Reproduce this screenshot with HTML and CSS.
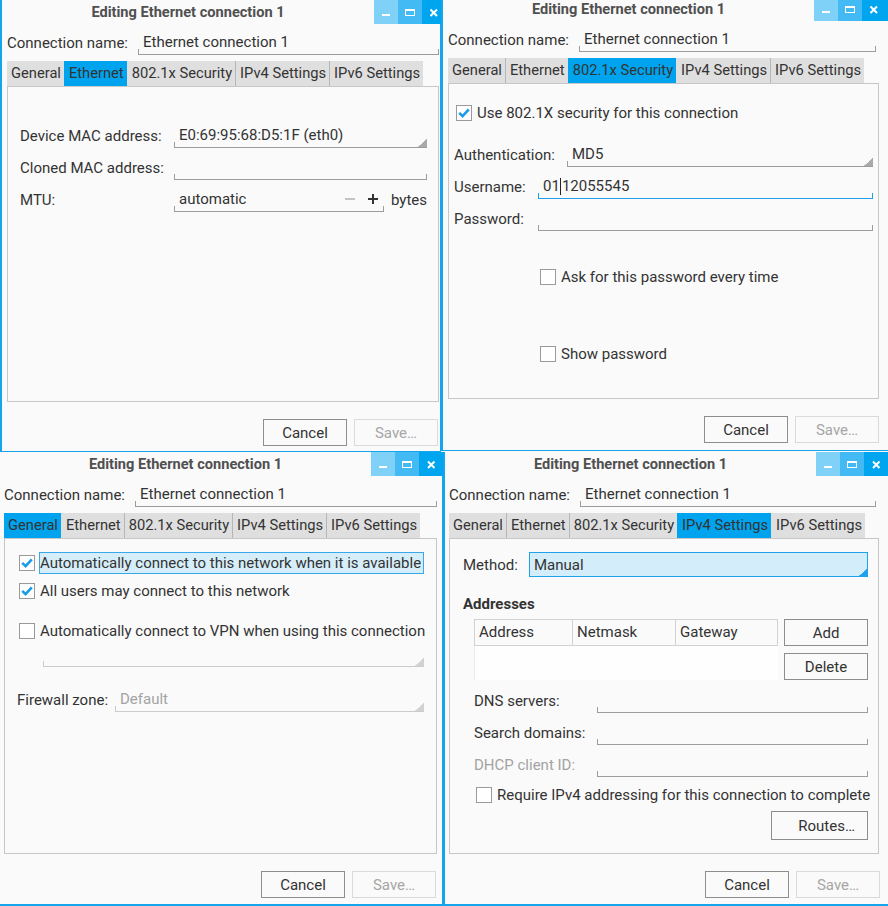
FILE: index.html
```html
<!DOCTYPE html>
<html>
<head>
<meta charset="utf-8">
<title>Editing Ethernet connection 1</title>
<link rel="stylesheet" href="styles.css">
</head>
<body>
<div class="screen">

  <!-- Window 1: Ethernet tab -->
  <section class="win w1">
    <header class="titlebar">
      <div class="title">Editing Ethernet connection 1</div>
      <div class="tb tb-min"><svg width="24" height="24" viewBox="0 0 24 24"><rect x="8" y="14" width="8" height="2" fill="#fff"/></svg></div>
      <div class="tb tb-max"><svg width="24" height="24" viewBox="0 0 24 24"><rect x="7.5" y="9.5" width="9" height="6" fill="none" stroke="#fff"/><rect x="7" y="9" width="10" height="2" fill="#fff"/></svg></div>
      <div class="tb tb-close"><svg width="24" height="24" viewBox="0 0 24 24"><path d="M8.5 9.5 L15 16 M15 9.5 L8.5 16" stroke="#fff" stroke-width="2"/></svg></div>
    </header>
    <div class="body">
      <div class="conn-row"><span class="conn-lbl">Connection name:</span><div class="entry">Ethernet connection 1</div></div>
      <nav class="tabs">
        <span class="tab">General</span><span class="tab active">Ethernet</span><span class="tab">802.1x Security</span><span class="tab">IPv4 Settings</span><span class="tab">IPv6 Settings</span>
      </nav>
      <div class="panel p-eth">
        <div class="row"><span class="lbl">Device MAC address:</span><div class="entry combo">E0:69:95:68:D5:1F (eth0)</div></div>
        <div class="row"><span class="lbl">Cloned MAC address:</span><div class="entry"></div></div>
        <div class="row"><span class="lbl">MTU:</span><div class="entry spin"><span class="spin-val">automatic</span><svg class="spin-minus" width="10" height="10" viewBox="0 0 10 10"><rect x="0" y="4" width="10" height="2" fill="#c4c4c4"/></svg><svg class="spin-plus" width="10" height="10" viewBox="0 0 10 10"><rect x="0" y="4" width="10" height="2" fill="#333"/><rect x="4" y="0" width="2" height="10" fill="#333"/></svg></div><span class="unit">bytes</span></div>
      </div>
      <div class="actions a1"><span class="btn">Cancel</span><span class="btn disabled">Save…</span></div>
    </div>
  </section>

  <!-- Window 2: 802.1x Security tab -->
  <section class="win w2">
    <header class="titlebar">
      <div class="title">Editing Ethernet connection 1</div>
      <div class="tb tb-min"><svg width="24" height="24" viewBox="0 0 24 24"><rect x="8" y="14" width="8" height="2" fill="#fff"/></svg></div>
      <div class="tb tb-max"><svg width="24" height="24" viewBox="0 0 24 24"><rect x="7.5" y="9.5" width="9" height="6" fill="none" stroke="#fff"/><rect x="7" y="9" width="10" height="2" fill="#fff"/></svg></div>
      <div class="tb tb-close"><svg width="24" height="24" viewBox="0 0 24 24"><path d="M8.5 9.5 L15 16 M15 9.5 L8.5 16" stroke="#fff" stroke-width="2"/></svg></div>
    </header>
    <div class="body">
      <div class="conn-row"><span class="conn-lbl">Connection name:</span><div class="entry short">Ethernet connection 1</div></div>
      <nav class="tabs">
        <span class="tab">General</span><span class="tab">Ethernet</span><span class="tab active">802.1x Security</span><span class="tab">IPv4 Settings</span><span class="tab">IPv6 Settings</span>
      </nav>
      <div class="panel p-sec">
        <div class="row chk-row s-use"><svg class="cb" viewBox="0 0 16 16"><rect x="0.5" y="0.5" width="15" height="15" fill="#fff" stroke="#9a9a9a"/><path d="M3.2 7.8 L6.6 11.2 L12.8 4.4" fill="none" stroke="#1a9de8" stroke-width="2.6"/></svg><span class="ctext">Use 802.1X security for this connection</span></div>
        <div class="row s-auth"><span class="lbl">Authentication:</span><div class="entry combo">MD5</div></div>
        <div class="row s-user"><span class="lbl">Username:</span><div class="entry focus">01<span class="caret"></span>12055545</div></div>
        <div class="row s-pass"><span class="lbl">Password:</span><div class="entry"></div></div>
        <div class="row chk-row s-ask"><svg class="cb" viewBox="0 0 16 16"><rect x="0.5" y="0.5" width="15" height="15" fill="#fff" stroke="#9a9a9a"/></svg><span class="ctext">Ask for this password every time</span></div>
        <div class="row chk-row s-show"><svg class="cb" viewBox="0 0 16 16"><rect x="0.5" y="0.5" width="15" height="15" fill="#fff" stroke="#9a9a9a"/></svg><span class="ctext">Show password</span></div>
      </div>
      <div class="actions a2"><span class="btn">Cancel</span><span class="btn disabled">Save…</span></div>
    </div>
  </section>

  <!-- Window 3: General tab -->
  <section class="win w3">
    <header class="titlebar">
      <div class="title">Editing Ethernet connection 1</div>
      <div class="tb tb-min"><svg width="24" height="24" viewBox="0 0 24 24"><rect x="8" y="14" width="8" height="2" fill="#fff"/></svg></div>
      <div class="tb tb-max"><svg width="24" height="24" viewBox="0 0 24 24"><rect x="7.5" y="9.5" width="9" height="6" fill="none" stroke="#fff"/><rect x="7" y="9" width="10" height="2" fill="#fff"/></svg></div>
      <div class="tb tb-close"><svg width="24" height="24" viewBox="0 0 24 24"><path d="M9 9.5 L15.5 16 M15.5 9.5 L9 16" stroke="#fff" stroke-width="2"/></svg></div>
    </header>
    <div class="body">
      <div class="conn-row"><span class="conn-lbl">Connection name:</span><div class="entry">Ethernet connection 1</div></div>
      <nav class="tabs">
        <span class="tab active">General</span><span class="tab">Ethernet</span><span class="tab">802.1x Security</span><span class="tab">IPv4 Settings</span><span class="tab">IPv6 Settings</span>
      </nav>
      <div class="panel p-gen">
        <div class="row chk-row g1"><svg class="cb" viewBox="0 0 16 16"><rect x="0.5" y="0.5" width="15" height="15" fill="#fff" stroke="#9a9a9a"/><path d="M3.2 7.8 L6.6 11.2 L12.8 4.4" fill="none" stroke="#1a9de8" stroke-width="2.6"/></svg><span class="focusbox">Automatically connect to this network when it is available</span></div>
        <div class="row chk-row g2"><svg class="cb" viewBox="0 0 16 16"><rect x="0.5" y="0.5" width="15" height="15" fill="#fff" stroke="#9a9a9a"/><path d="M3.2 7.8 L6.6 11.2 L12.8 4.4" fill="none" stroke="#1a9de8" stroke-width="2.6"/></svg><span class="ctext">All users may connect to this network</span></div>
        <div class="row chk-row g3"><svg class="cb" viewBox="0 0 16 16"><rect x="0.5" y="0.5" width="15" height="15" fill="#fff" stroke="#9a9a9a"/></svg><span class="ctext">Automatically connect to VPN when using this connection</span></div>
        <div class="entry combo dis vpn"></div>
        <div class="row g-fw"><span class="lbl">Firewall zone:</span><div class="entry combo dis dis-text">Default</div></div>
      </div>
      <div class="actions a3"><span class="btn">Cancel</span><span class="btn disabled">Save…</span></div>
    </div>
  </section>

  <!-- Window 4: IPv4 Settings tab -->
  <section class="win w4">
    <header class="titlebar">
      <div class="title">Editing Ethernet connection 1</div>
      <div class="tb tb-min"><svg width="24" height="24" viewBox="0 0 24 24"><rect x="8" y="14" width="8" height="2" fill="#fff"/></svg></div>
      <div class="tb tb-max"><svg width="24" height="24" viewBox="0 0 24 24"><rect x="7.5" y="9.5" width="9" height="6" fill="none" stroke="#fff"/><rect x="7" y="9" width="10" height="2" fill="#fff"/></svg></div>
      <div class="tb tb-close"><svg width="24" height="24" viewBox="0 0 24 24"><path d="M9 9.5 L15.5 16 M15.5 9.5 L9 16" stroke="#fff" stroke-width="2"/></svg></div>
    </header>
    <div class="body">
      <div class="conn-row"><span class="conn-lbl">Connection name:</span><div class="entry short">Ethernet connection 1</div></div>
      <nav class="tabs">
        <span class="tab">General</span><span class="tab">Ethernet</span><span class="tab">802.1x Security</span><span class="tab active">IPv4 Settings</span><span class="tab">IPv6 Settings</span>
      </nav>
      <div class="panel p-ip4">
        <div class="row i-method"><span class="lbl">Method:</span><div class="combo-focus">Manual</div></div>
        <div class="addr-title">Addresses</div>
        <div class="addr-block">
          <div class="table">
            <div class="thead"><span class="th c1">Address</span><span class="th c2">Netmask</span><span class="th c3">Gateway</span></div>
            <div class="tbody"></div>
          </div>
          <div class="addr-btns"><span class="btn">Add</span><span class="btn">Delete</span></div>
        </div>
        <div class="row ip-row first"><span class="lbl">DNS servers:</span><div class="entry"></div></div>
        <div class="row ip-row"><span class="lbl">Search domains:</span><div class="entry"></div></div>
        <div class="row ip-row"><span class="lbl dis-text">DHCP client ID:</span><div class="entry"></div></div>
        <div class="row chk-row i-req"><svg class="cb" viewBox="0 0 16 16"><rect x="0.5" y="0.5" width="15" height="15" fill="#fff" stroke="#9a9a9a"/></svg><span class="ctext">Require IPv4 addressing for this connection to complete</span></div>
        <div class="routes-row"><span class="btn routes">Routes…</span></div>
      </div>
      <div class="actions a4"><span class="btn">Cancel</span><span class="btn disabled">Save…</span></div>
    </div>
  </section>

</div>
</body>
</html>
```

FILE: styles.css
```css
* { box-sizing: border-box; }
html, body { margin: 0; padding: 0; }
body {
  width: 888px;
  height: 906px;
  overflow: hidden;
  background: #fafafa;
  font-family: Roboto, "Liberation Sans", sans-serif;
  font-size: 15px;
  color: #333;
}

.screen {
  display: flex;
  flex-wrap: wrap;
  align-items: flex-start;
  width: 888px;
}

/* windows */
.win {
  display: flex;
  flex-direction: column;
  background: #fafafa;
  border-left: 2px solid #14a5ec;
  border-bottom: 1px solid #14a5ec;
  overflow: hidden;
}
.w1 { width: 441px; height: 452px; }
.w2 { width: 447px; height: 451px; }
.w3 { width: 443px; height: 454px; border-left: 0; border-bottom-width: 2px; }
.w4 { width: 445px; height: 454px; border-bottom-width: 2px; }

.titlebar { display: flex; height: 24px; flex: none; }
.w2 .titlebar { margin-top: -3px; }
.title {
  flex: 1;
  text-align: center;
  font-weight: bold;
  font-size: 14.6px;
  color: #505050;
  line-height: 24px;
  white-space: nowrap;
}
.tb { flex: none; width: 24px; height: 24px; display: flex; overflow: hidden; }
.tb svg { flex: none; }
.tb-min { background: #80d1f8; }
.tb-max { background: #43baf3; }
.tb-close { background: #00a5ef; }
.w1 .tb-close { width: 19px; }
.w2 .tb-close { width: 26px; }

.body { flex: 1; display: flex; flex-direction: column; }
.w1 .body { padding: 0 1px 0 5px; border-right: 1px solid #14a5ec; }
.w2 .body { padding: 0 9px 0 5px; }
.w3 .body { padding: 0 5px 0 4px; border-right: 1px solid #14a5ec; }
.w4 .body { padding: 0 9px 0 4px; }

/* connection name */
.conn-row { display: flex; align-items: center; height: 25px; margin-top: 6px; flex: none; }
.conn-lbl { flex: none; width: 131px; white-space: nowrap; }
.entry.short { margin-right: 3px; }

/* tabs */
.tabs { display: flex; height: 25px; margin-top: 6px; flex: none; }
.tab {
  padding: 0 3px 0 4px;
  background: #dfdfdf;
  font-size: 14.7px;
  line-height: 25px;
  white-space: nowrap;
}
.tab + .tab { border-left: 1px solid #b6b6b6; }
.tab.active { background: #00a3ee; border-left-color: #00a3ee; }
.tab.active + .tab { border-left-color: #dfdfdf; }

/* notebook panel */
.panel {
  height: 316px;
  flex: none;
  border: 1px solid #c7c7c7;
  display: flex;
  flex-direction: column;
}

/* generic rows */
.row { display: flex; align-items: center; height: 25px; flex: none; }
.lbl { flex: none; white-space: nowrap; }

.entry {
  flex: 1;
  height: 25px;
  display: flex;
  align-items: center;
  padding-left: 5px;
  white-space: nowrap;
  overflow: hidden;
  border-bottom: 1px solid #9d9d9d;
  background:
    linear-gradient(#9d9d9d, #9d9d9d) left bottom / 1px 5px no-repeat,
    linear-gradient(#9d9d9d, #9d9d9d) right bottom / 1px 5px no-repeat;
}
.entry.combo {
  background:
    linear-gradient(to top left, #a9a9a9 50%, transparent 52%) right bottom / 9px 8px no-repeat,
    linear-gradient(#9d9d9d, #9d9d9d) left bottom / 1px 5px no-repeat;
}
.entry.combo.dis {
  border-bottom-color: #cbcbcb;
  background:
    linear-gradient(to top left, #d2d2d2 50%, transparent 52%) right bottom / 9px 8px no-repeat,
    linear-gradient(#cbcbcb, #cbcbcb) left bottom / 1px 5px no-repeat;
}
.entry.focus {
  border-bottom-color: #1e9fe8;
  background:
    linear-gradient(#1e9fe8, #1e9fe8) left bottom / 1px 5px no-repeat,
    linear-gradient(#1e9fe8, #1e9fe8) right bottom / 1px 5px no-repeat;
}
.caret { display: inline-block; width: 1px; height: 17px; background: #222; margin: 0 0.5px; }
.dis-text { color: #a3a3a3; }

.cb { width: 16px; height: 16px; flex: none; }
.ctext { margin-left: 5px; white-space: nowrap; }

/* buttons */
.actions { display: flex; justify-content: flex-end; gap: 7px; margin-top: 17px; flex: none; }
.a1, .a3 { margin-right: 1px; }
.a4 { margin-right: -1px; }
.btn {
  width: 84px;
  height: 27px;
  display: flex;
  align-items: center;
  justify-content: center;
  border: 1px solid #8e8e8e;
  background: #fafafa;
  white-space: nowrap;
}
.btn.disabled { border-color: #dadada; color: #a6a6a6; }

/* Ethernet tab */
.p-eth { padding: 36px 11px 0 12px; }
.p-eth .row + .row { margin-top: 7px; }
.p-eth .lbl { width: 154px; }
.spin { flex: none; width: 210px; padding-right: 6px; }
.spin-val { flex: 1; }
.spin-minus { flex: none; }
.spin-plus { flex: none; margin-left: 13px; }
.unit { margin-left: 7px; }

/* 802.1x tab */
.p-sec { padding: 16px 5px 0 5px; }
.s-use { margin-left: 2px; }
.s-auth { margin-top: 17px; }
.s-auth .lbl { width: 113px; }
.s-user { margin-top: 7px; }
.s-pass { margin-top: 7px; }
.s-user .lbl, .s-pass .lbl { width: 84px; }
.s-ask { margin-top: 33px; margin-left: 86px; }
.s-show { margin-top: 52px; margin-left: 86px; }

/* General tab */
.p-gen { padding: 11px 12px 0 0; }
.g1, .g2, .g3 { margin-left: 14px; }
.g2 { margin-top: 3px; }
.g3 { margin-top: 15px; }
.focusbox {
  margin-left: 4px;
  height: 22px;
  line-height: 20px;
  padding-right: 2px;
  border: 1px solid #38a8ea;
  background: #d6eefa;
  white-space: nowrap;
}
.entry.vpn { flex: none; height: 24px; margin-left: 38px; }
.g-fw { margin-top: 20px; margin-left: 12px; }
.g-fw .lbl { width: 98px; }

/* IPv4 tab */
.p-ip4 { padding: 13px 10px 0 13px; }
.i-method .lbl { width: 66px; }
.combo-focus {
  flex: 1;
  height: 25px;
  display: flex;
  align-items: center;
  padding-left: 4px;
  border: 1px solid #1ea3ea;
  background:
    linear-gradient(to top left, #1ea3ea 50%, transparent 52%) right bottom / 8px 7px no-repeat,
    #d4edfa;
}
.addr-title { margin-top: 17px; height: 20px; line-height: 20px; font-weight: bold; flex: none; }
.addr-block { display: flex; margin-top: 5px; margin-left: 11px; height: 61px; flex: none; }
.table { width: 304px; display: flex; flex-direction: column; }
.thead { display: flex; height: 27px; border: 1px solid #d2d2d2; flex: none; }
.th { padding-left: 4px; line-height: 25px; white-space: nowrap; }
.c1 { width: 98px; border-right: 1px solid #d2d2d2; }
.c2 { width: 103px; border-right: 1px solid #d2d2d2; }
.c3 { flex: 1; }
.tbody { flex: 1; background: #fefefe; border-left: 1px solid #ececec; }
.addr-btns { margin-left: 6px; display: flex; flex-direction: column; gap: 7px; }
.ip-row { margin-top: 7px; margin-left: 11px; }
.ip-row.first { margin-top: 8px; }
.ip-row .lbl { width: 123px; }
.i-req { margin-top: 5px; margin-left: 13px; }
.routes-row { display: flex; justify-content: flex-end; margin-top: 4px; flex: none; }
.btn.routes { width: 97px; height: 29px; justify-content: flex-end; padding-right: 12px; }
```
